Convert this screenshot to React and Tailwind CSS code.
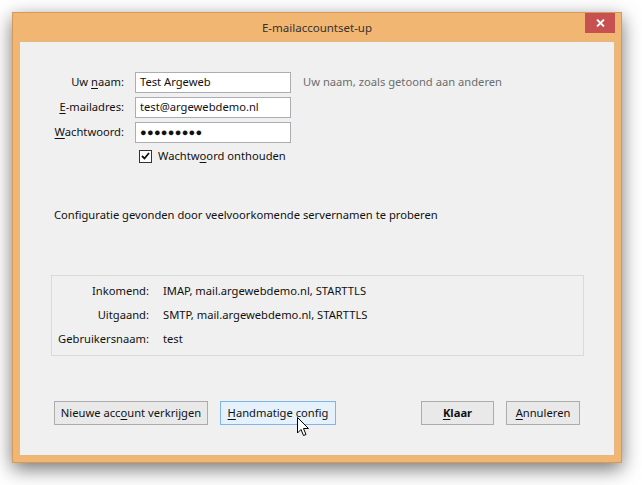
import React from "react";

// Windows 8 style "E-mailaccountset-up" dialog (Thunderbird account wizard)
const FONT = { fontFamily: '"Noto Sans", "Open Sans", sans-serif' };

const Key = ({ children }) => <span className="underline underline-offset-2">{children}</span>;

const Field = ({ label, value, password }) => (
  <div className="flex h-[21px] items-center">
    <div className="w-[105px] pr-[1px] text-right">{label}</div>
    <div className="ml-[10px] flex h-full w-[156px] items-center border border-[#abadb3] bg-white px-[4px]">
      {password ? (
        <span className="text-[11px] tracking-[0.3px]">{value}</span>
      ) : (
        value
      )}
    </div>
  </div>
);

const Btn = ({ children, className = "" }) => (
  <button
    type="button"
    className={`flex h-[24px] items-center justify-center border text-[11.2px] text-[#111] ${className}`}
  >
    {children}
  </button>
);

const Cursor = () => (
  <svg
    className="absolute left-[77px] top-[16px]"
    width="13"
    height="20"
    viewBox="0 0 13 20"
  >
    <path
      d="M0.5 0.5 L0.5 16 L4 12.5 L6.5 18.5 L9 17.5 L6.5 11.5 L11.5 11.5 Z"
      fill="white"
      stroke="black"
      strokeWidth="1"
      strokeLinejoin="miter"
    />
  </svg>
);

export default function App() {
  return (
    <div className="h-[485px] w-[642px] bg-white pl-[12px] pt-[12px]" style={FONT}>
      <div className="flex h-[451px] w-[610px] flex-col border border-[#d29a5c] bg-[#f2b673] shadow-[0_6px_18px_rgba(0,0,0,0.55)]">
        {/* title bar */}
        <div className="relative flex h-[28px] items-center justify-center pt-[2px] text-[11.5px] text-[#333]">
          E-mailaccountset-up
          <div className="absolute right-[6px] top-0 flex h-[20px] w-[30px] items-center justify-center bg-[#c75050]">
            <svg width="9" height="8" viewBox="0 0 9 8">
              <path d="M1 0.5 L8 7.5 M8 0.5 L1 7.5" stroke="white" strokeWidth="1.8" />
            </svg>
          </div>
        </div>

        {/* client area */}
        <div className="mx-[6px] mb-[6px] flex flex-1 flex-col border border-[#e2b888] bg-[#f0f0f0] text-[11.2px] text-[#111]">
          <div className="mt-[30px] flex flex-col gap-[4px]">
            <div className="flex items-center">
              <Field label={<>Uw <Key>n</Key>aam:</>} value="Test Argeweb" />
              <span className="ml-[12px] text-[#6d6d6d]">Uw naam, zoals getoond aan anderen</span>
            </div>
            <Field label={<><Key>E</Key>-mailadres:</>} value="test@argewebdemo.nl" />
            <Field label={<><Key>W</Key>achtwoord:</>} value="●●●●●●●●●" password />
          </div>

          <div className="ml-[119px] mt-[6px] flex h-[14px] items-center gap-[6px]">
            <div className="flex h-[13px] w-[13px] items-center justify-center border border-[#333] bg-white">
              <svg width="9" height="8" viewBox="0 0 9 8">
                <path d="M1 4 L3.5 6.5 L8 1" fill="none" stroke="#111" strokeWidth="1.8" />
              </svg>
            </div>
            <span>Wachtw<Key>o</Key>ord onthouden</span>
          </div>

          <div className="ml-[34px] mt-[44px] leading-[16px]">
            Configuratie gevonden door veelvoorkomende servernamen te proberen
          </div>

          <div className="ml-[31px] mt-[52px] flex h-[81px] w-[533px] flex-col border border-[#dadada] pt-[3px]">
            {[
              ["Inkomend:", "IMAP, mail.argewebdemo.nl, STARTTLS"],
              ["Uitgaand:", "SMTP, mail.argewebdemo.nl, STARTTLS"],
              ["Gebruikersnaam:", "test"],
            ].map(([k, v]) => (
              <div key={k} className="flex h-[24px] items-center">
                <div className="w-[97px] text-right">{k}</div>
                <div className="ml-[14px]">{v}</div>
              </div>
            ))}
          </div>

          <div className="ml-[34px] mt-[45px] flex items-center">
            <Btn className="w-[154px] border-[#acacac] bg-[#e9e9e9]">
              Nieuwe acc<Key>o</Key>unt verkrijgen
            </Btn>
            <div className="relative ml-[12px]">
              <Btn className="w-[116px] border-[#7eb4ea] bg-[#e5f1fb]">
                <Key>H</Key>andmatige config
              </Btn>
              <Cursor />
            </div>
            <Btn className="ml-[85px] w-[73px] border-[#acacac] bg-[#e9e9e9] font-bold">
              <Key>K</Key>laar
            </Btn>
            <Btn className="ml-[12px] w-[74px] border-[#acacac] bg-[#e9e9e9]">
              <Key>A</Key>nnuleren
            </Btn>
          </div>
        </div>
      </div>
    </div>
  );
}
